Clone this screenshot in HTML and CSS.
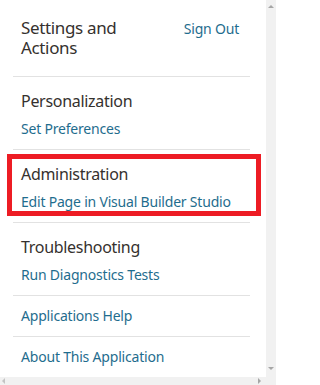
FILE: index.html
```html
<!DOCTYPE html>
<html lang="en">
<head>
<meta charset="utf-8">
<title>Settings and Actions</title>
<link rel="stylesheet" href="styles.css">
</head>
<body>
<div class="frame">
  <div class="viewport">
    <div class="panel">
      <div class="header">
        <h1 class="title">Settings and Actions</h1>
        <a class="link signout" href="#">Sign Out</a>
      </div>
      <div class="section">
        <h2 class="section-title">Personalization</h2>
        <a class="link" href="#">Set Preferences</a>
      </div>
      <div class="section highlighted">
        <h2 class="section-title">Administration</h2>
        <a class="link" href="#">Edit Page in Visual Builder Studio</a>
        <div class="highlight"></div>
      </div>
      <div class="section">
        <h2 class="section-title">Troubleshooting</h2>
        <a class="link" href="#">Run Diagnostics Tests</a>
      </div>
      <div class="section single">
        <a class="link" href="#">Applications Help</a>
      </div>
      <div class="section single">
        <a class="link" href="#">About This Application</a>
      </div>
    </div>
  </div>
  <div class="vscroll">
    <svg class="arrow" width="6" height="4" viewBox="0 0 6 4"><polygon points="0,3 3,0 6,3" fill="#a6a6a6"/></svg>
    <svg class="arrow" width="6" height="4" viewBox="0 0 6 4"><polygon points="0,0 6,0 3,3" fill="#a6a6a6"/></svg>
  </div>
  <div class="hscroll">
    <svg class="arrow" width="4" height="6" viewBox="0 0 4 6"><polygon points="3,0 3,6 0,3" fill="#c4c4c4"/></svg>
    <svg class="arrow" width="4" height="6" viewBox="0 0 4 6"><polygon points="0,0 0,6 3,3" fill="#a6a6a6"/></svg>
  </div>
  <div class="corner"></div>
</div>
</body>
</html>
```
FILE: styles.css
```css
html, body {
  margin: 0;
  padding: 0;
  background: #ffffff;
}

.frame {
  width: 276px;
  height: 385px;
  display: grid;
  grid-template-columns: 266px 10px;
  grid-template-rows: 377px 8px;
  overflow: hidden;
  font-family: "Noto Sans", "Open Sans", sans-serif;
}

.viewport {
  overflow: hidden;
  background: #ffffff;
}

.panel {
  width: 237px;
  margin-left: 13px;
}

.header {
  display: flex;
  justify-content: space-between;
  align-items: flex-start;
  padding: 18px 11px 18px 8px;
  border-bottom: 1px solid #e2e2e2;
}

.title {
  margin: 0;
  width: 130px;
  font-size: 17px;
  line-height: 20px;
  letter-spacing: -0.35px;
  font-weight: 400;
  color: #35312e;
}

.link {
  display: block;
  font-size: 14px;
  line-height: 20px;
  letter-spacing: -0.2px;
  color: #1f6d8e;
  text-decoration: none;
}

.signout {
  margin-top: 1px;
}

.section {
  position: relative;
  display: flex;
  flex-direction: column;
  gap: 8px;
  padding: 14px 8px 10px;
  border-bottom: 1px solid #e2e2e2;
}

.section.single {
  padding: 10px 8px 10px;
}

.section-title {
  margin: 0;
  font-size: 16px;
  line-height: 20px;
  letter-spacing: -0.3px;
  font-weight: 400;
  color: #35312e;
}

.highlight {
  position: absolute;
  top: 4px;
  bottom: 6px;
  left: -6px;
  right: -11px;
  border: 5px solid #ed1c24;
  pointer-events: none;
}

.vscroll {
  background: #f1f1f1;
  display: flex;
  flex-direction: column;
  justify-content: space-between;
  align-items: center;
  padding: 5px 0 6px;
}

.hscroll {
  background: #f1f1f1;
  display: flex;
  justify-content: space-between;
  align-items: center;
  padding: 0 4px 0 2px;
}

.corner {
  background: #f1f1f1;
}

.arrow {
  display: block;
}
```
